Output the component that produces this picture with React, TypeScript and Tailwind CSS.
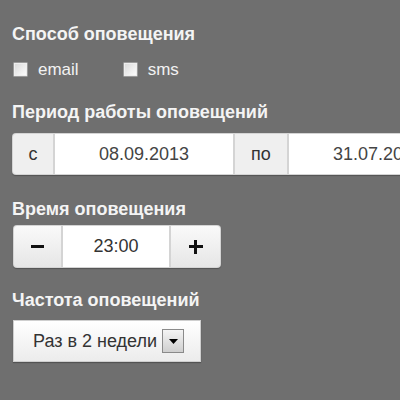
import React from "react";

const font = { fontFamily: '"Liberation Sans", Arial, sans-serif' };

function Check({ label }: { label: string }) {
  return (
    <label className="flex items-center gap-[10px] h-[15px]">
      <span className="w-[15px] h-[15px] border border-[#9a9a9a] bg-gradient-to-br from-[#d8d8d8] to-[#ffffff] rounded-[1px] shadow-[inset_0_0_0_1px_#eeeeee]" />
      <span className="text-[17px] text-[#f2f2f2] leading-none">{label}</span>
    </label>
  );
}

export default function App() {
  return (
    <div className="w-[400px] h-[400px] bg-[#6f6f6f] overflow-hidden pl-[12px] pt-[23px]" style={font}>
      <div className="text-[18px] font-bold text-[#f4f4f4] leading-[22px]">Способ оповещения</div>
      <div className="flex gap-[44px] mt-[17px] pl-[1px]">
        <Check label="email" />
        <Check label="sms" />
      </div>

      <div className="text-[18px] font-bold text-[#f4f4f4] leading-[22px] mt-[24px]">Период работы оповещений</div>
      <div className="mt-[10px] flex h-[42px] w-[420px] rounded-[4px] bg-[#d4d4d4] p-[1px] gap-[2px] shadow-[0_1px_1px_rgba(0,0,0,0.25)]">
        <div className="w-[40px] flex items-center justify-center bg-[#efefef] rounded-l-[3px] text-[18px] text-[#333]">с</div>
        <div className="w-[178px] flex items-center justify-center bg-white text-[18px] text-[#444]">08.09.2013</div>
        <div className="w-[52px] flex items-center justify-center bg-[#efefef] text-[18px] text-[#333]">по</div>
        <div className="flex-1 flex items-center pl-[44px] bg-white text-[18px] text-[#444] whitespace-nowrap overflow-hidden">31.07.2014</div>
      </div>

      <div className="text-[18px] font-bold text-[#f4f4f4] leading-[22px] mt-[23px]">Время оповещения</div>
      <div className="mt-[5px] ml-[1px] flex h-[43px] w-[208px] rounded-[4px] bg-[#d4d4d4] p-[1px] gap-[2px] shadow-[0_1px_1px_rgba(0,0,0,0.25)]">
        <div className="w-[47px] flex items-center justify-center bg-gradient-to-b from-[#fafafa] to-[#e6e6e6] rounded-l-[3px]">
          <span className="block w-[13px] h-[3px] bg-[#111]" />
        </div>
        <div className="flex-1 flex items-center justify-center bg-white text-[18px] text-[#333]">23:00</div>
        <div className="w-[49px] flex items-center justify-center bg-gradient-to-b from-[#fafafa] to-[#e6e6e6] rounded-r-[3px] relative">
          <span className="block w-[14px] h-[3px] bg-[#111]" />
          <span className="absolute w-[3px] h-[14px] bg-[#111]" />
        </div>
      </div>

      <div className="text-[18px] font-bold text-[#f4f4f4] leading-[22px] mt-[21px]">Частота оповещений</div>
      <div className="mt-[9px] ml-[1px] flex items-center h-[42px] w-[188px] bg-gradient-to-b from-white to-[#ececec] border border-[#cfcfcf] shadow-[0_1px_1px_rgba(0,0,0,0.25)] pl-[19px]">
        <span className="text-[18px] text-[#333]">Раз в 2 недели</span>
        <span className="ml-[5px] w-[22px] h-[24px] border border-[#8a8a8a] bg-gradient-to-b from-[#f4f4f4] to-[#cfcfcf] flex items-center justify-center">
          <svg width="9" height="5" viewBox="0 0 9 5"><path d="M0 0H9L4.5 5Z" fill="#000" /></svg>
        </span>
      </div>
    </div>
  );
}
